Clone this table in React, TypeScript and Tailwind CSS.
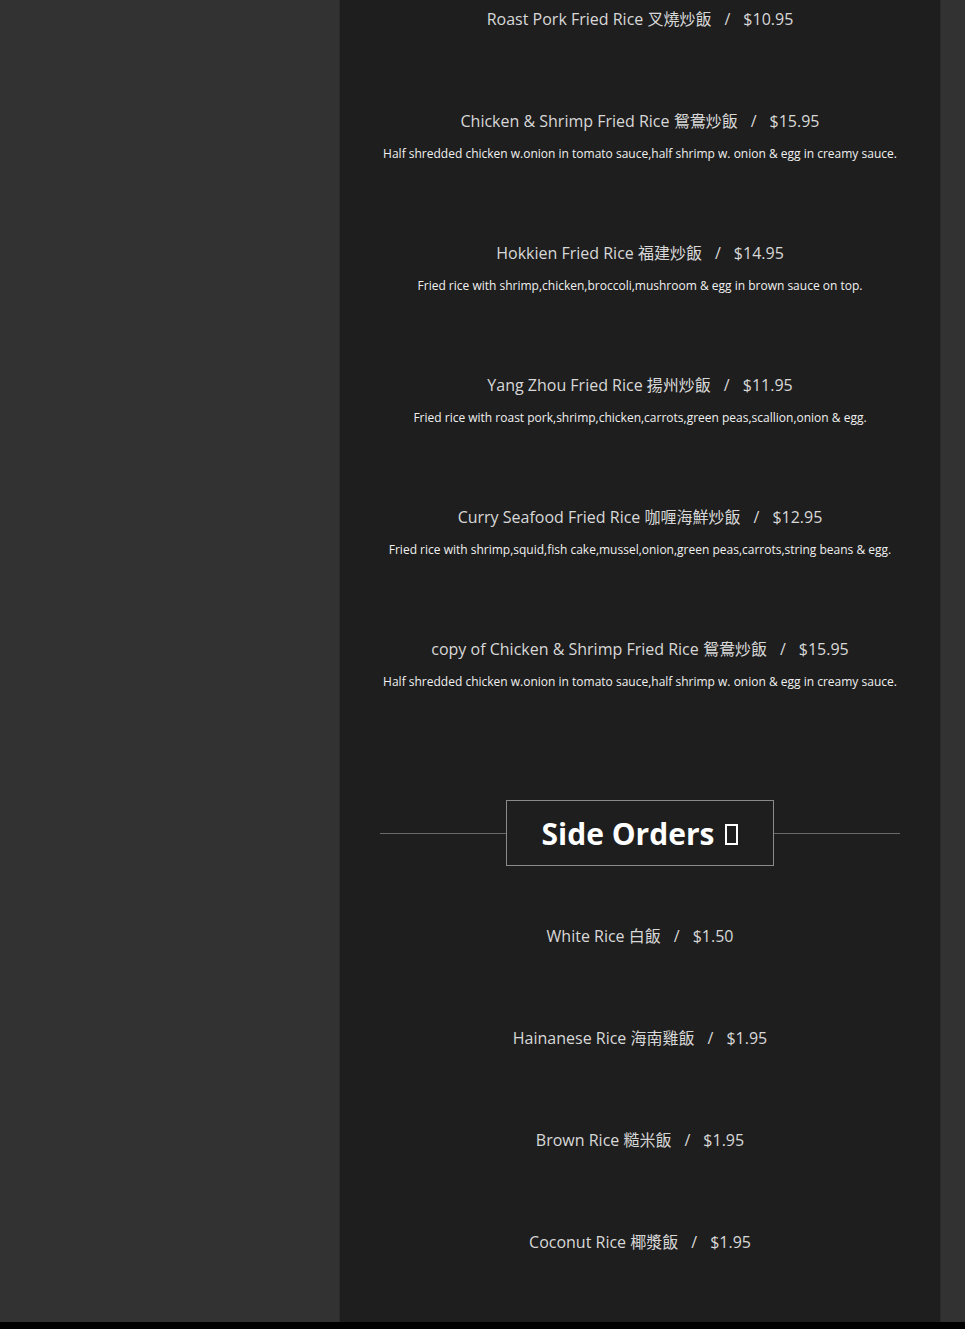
import React from 'react'

interface MenuItem {
  name: string
  zh: string
  price: string
  desc?: string
}

const friedRice: MenuItem[] = [
  { name: 'Roast Pork Fried Rice', zh: '叉燒炒飯', price: '$10.95' },
  {
    name: 'Chicken & Shrimp Fried Rice',
    zh: '鴛鴦炒飯',
    price: '$15.95',
    desc: 'Half shredded chicken w.onion in tomato sauce,half shrimp w. onion & egg in creamy sauce.',
  },
  {
    name: 'Hokkien Fried Rice',
    zh: '福建炒飯',
    price: '$14.95',
    desc: 'Fried rice with shrimp,chicken,broccoli,mushroom & egg in brown sauce on top.',
  },
  {
    name: 'Yang Zhou Fried Rice',
    zh: '揚州炒飯',
    price: '$11.95',
    desc: 'Fried rice with roast pork,shrimp,chicken,carrots,green peas,scallion,onion & egg.',
  },
  {
    name: 'Curry Seafood Fried Rice',
    zh: '咖喱海鮮炒飯',
    price: '$12.95',
    desc: 'Fried rice with shrimp,squid,fish cake,mussel,onion,green peas,carrots,string beans & egg.',
  },
  {
    name: 'copy of Chicken & Shrimp Fried Rice',
    zh: '鴛鴦炒飯',
    price: '$15.95',
    desc: 'Half shredded chicken w.onion in tomato sauce,half shrimp w. onion & egg in creamy sauce.',
  },
]

const sideOrders: MenuItem[] = [
  { name: 'White Rice', zh: '白飯', price: '$1.50' },
  { name: 'Hainanese Rice', zh: '海南雞飯', price: '$1.95' },
  { name: 'Brown Rice', zh: '糙米飯', price: '$1.95' },
  { name: 'Coconut Rice', zh: '椰漿飯', price: '$1.95' },
]

function Item({ item }: { item: MenuItem }) {
  return (
    <div className="flex flex-col items-center text-center">
      <div className="text-[16px] leading-[24px] text-[#d8d8d8]">
        <span>{item.name} {item.zh}</span>
        <span className="mx-[13px]">/</span>
        <span>{item.price}</span>
      </div>
      {item.desc && (
        <p className="mt-[12px] text-[12px] leading-[18px] text-[#f0f0f0]">{item.desc}</p>
      )}
    </div>
  )
}

export default function App() {
  return (
    <div className="w-[965px] bg-black" style={{ fontFamily: '"Open Sans", "Noto Sans CJK TC", sans-serif' }}>
      <div className="flex h-[1322px]">
        <div className="w-[340px] bg-[#323232] border-r border-[#2a2a2a]" />
        <main className="w-[600px] bg-[#1e1e1e] px-[40px] pt-[7px]">
          <div className="flex flex-col gap-[78px]">
            {friedRice.map((item, i) => (
              <Item key={i} item={item} />
            ))}
          </div>

          <div className="mt-[109px] flex items-center">
            <div className="h-px flex-1 bg-[#6a6a6a]" />
            <h2 className="border border-[#8a8a8a] px-[35px] h-[66px] flex items-center text-[30px] font-bold text-white">
              Side Orders
              {/* icon glyph that shows as an empty box */}
              <span aria-hidden className="ml-[11px] mt-[2px] inline-block w-[13px] h-[21px] border-2 border-white" />
            </h2>
            <div className="h-px flex-1 bg-[#6a6a6a]" />
          </div>

          <div className="mt-[58px] flex flex-col gap-[78px]">
            {sideOrders.map((item, i) => (
              <Item key={i} item={item} />
            ))}
          </div>
        </main>
        <div className="flex-1 bg-[#323232] border-l border-[#2a2a2a]" />
      </div>
      <div className="h-[7px] bg-black" />
    </div>
  )
}
